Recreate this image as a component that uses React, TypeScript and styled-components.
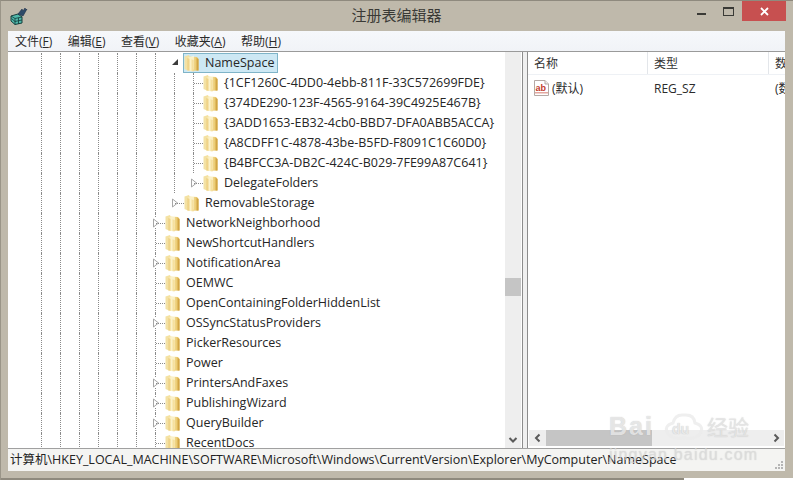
import React from "react";
import styled, { createGlobalStyle } from "styled-components";

const FONT = `"Open Sans", "Noto Sans CJK SC", sans-serif`;

const Global = createGlobalStyle`
  html, body { margin: 0; padding: 0; width: 793px; height: 480px; overflow: hidden; background: #fff; }
  #root { width: 793px; height: 480px; }
  * { box-sizing: border-box; }
`;

const Win = styled.div`
  position: relative;
  width: 793px;
  height: 480px;
  background: #bfb9ab;
  border-top: 1px solid #8f8a7e;
  border-left: 1px solid #9a9588;
  padding: 0 8px 9px 7px;
  display: flex;
  flex-direction: column;
  font-family: ${FONT};
  color: #222;
  overflow: hidden;
`;
const TitleBar = styled.div`
  height: 30px;
  flex: none;
  display: flex;
  align-items: flex-start;
  position: relative;
`;
const AppIcon = styled.svg`
  position: absolute;
  left: 2px;
  top: 6px;
`;
const Title = styled.div`
  flex: 1;
  text-align: center;
  font-size: 15px;
  line-height: 29px;
  color: #3a3a36;
`;
const Controls = styled.div`
  position: absolute;
  right: -1px;
  top: 0;
  display: flex;
  align-items: flex-start;
`;
const Ctl = styled.div<{ $w: number }>`
  width: ${(p) => p.$w}px;
  height: 20px;
  display: flex;
  align-items: center;
  justify-content: center;
`;
const CloseBtn = styled(Ctl)`
  background: #c75050;
`;
const MenuBar = styled.div`
  height: 21px;
  flex: none;
  background: linear-gradient(#f6f8fb, #f1f3f7);
  border-bottom: 1px solid #9a9a9a;
  display: flex;
  align-items: center;
  padding-left: 7px;
  gap: 15.5px;
  font-size: 12px;
`;
const MenuItem = styled.span`
  white-space: nowrap;
  color: #2b2b2b;
  u { text-decoration-thickness: 1px; text-underline-offset: 1px; }
`;
const Body = styled.div`
  flex: 1;
  min-height: 0;
  display: flex;
  background: #f0f0f0;
`;
const TreePane = styled.div`
  width: 515px;
  flex: none;
  background: #fff;
  display: flex;
  overflow: hidden;
  border-right: 1px solid #8d8d8d;
`;
const TreeRows = styled.div`
  flex: 1;
  min-width: 0;
  padding: 1px 0 0 24px;
  overflow: hidden;
`;
const Row = styled.div`
  height: 20px;
  display: flex;
  align-items: stretch;
  font-size: 12.5px;
  white-space: nowrap;
  color: #262626;
`;
const Guide = styled.div<{ $on?: boolean; $dash?: boolean }>`
  position: relative;
  width: 19px;
  flex: none;
  &::before {
    content: "";
    display: ${(p) => (p.$on ? "block" : "none")};
    position: absolute;
    left: 9px;
    top: 0;
    height: 20px;
    border-left: 1px dotted #8a8a8a;
  }
  &::after {
    content: "";
    display: ${(p) => (p.$dash ? "block" : "none")};
    position: absolute;
    left: 10px;
    top: 10px;
    width: 9px;
    border-top: 1px dotted #8a8a8a;
  }
`;
const Arrow = styled.svg`
  position: absolute;
  left: 6px;
  top: 5px;
  background: #fff;
`;
const Node = styled.div<{ $selected?: boolean }>`
  display: flex;
  align-items: center;
  gap: 6px;
  height: 20px;
  padding: 0 1px;
  margin-left: -1px;
  ${(p) =>
    p.$selected
      ? `background: #cde8f4; outline: 1px solid #7fb4c8; outline-offset: -1px; padding-right: 4px;`
      : ""}
`;
const Label = styled.span`
  line-height: 20px;
`;
const VScroll = styled.div`
  width: 16px;
  flex: none;
  background: #eeeeee;
  display: flex;
  flex-direction: column;
  margin-right: 1px;
`;
const ScrollBtn = styled.div`
  height: 17px;
  flex: none;
  display: flex;
  align-items: center;
  justify-content: center;
`;
const VTrack = styled.div`
  flex: 1;
  padding-top: 209px;
`;
const VThumb = styled.div`
  height: 18px;
  background: #c5c5c5;
`;
const Splitter = styled.div`
  width: 4px;
  flex: none;
  background: #f0f0f0;
`;
const ListPane = styled.div`
  flex: 1;
  min-width: 0;
  background: #fff;
  border-left: 1px solid #8d8d8d;
  display: flex;
  flex-direction: column;
  overflow: hidden;
`;
const Header = styled.div`
  height: 23px;
  flex: none;
  display: flex;
  font-size: 12px;
  border-bottom: 1px solid #eef1f5;
`;
const HeadCell = styled.div<{ $w: number }>`
  width: ${(p) => p.$w}px;
  flex: none;
  padding-left: 6px;
  line-height: 23px;
  color: #333;
  border-right: 1px solid #e3e6ea;
  white-space: nowrap;
  overflow: hidden;
`;
const ListRow = styled.div`
  height: 20px;
  margin-top: 3px;
  display: flex;
  align-items: center;
  font-size: 12px;
  color: #2b2b2b;
  flex: none;
`;
const ListCell = styled.div<{ $w: number }>`
  width: ${(p) => p.$w}px;
  flex: none;
  padding-left: 6px;
  display: flex;
  align-items: center;
  gap: 3px;
  white-space: nowrap;
  overflow: hidden;
`;
const Spacer = styled.div`
  flex: 1;
`;
const HScroll = styled.div`
  height: 16px;
  flex: none;
  margin: 0 1px 2px 1px;
  background: #eeeeee;
  display: flex;
  align-items: stretch;
`;
const HBtn = styled.div`
  width: 17px;
  flex: none;
  display: flex;
  align-items: center;
  justify-content: center;
`;
const HThumb = styled.div`
  width: 106px;
  background: #c5c5c5;
`;
const Status = styled.div`
  height: 23px;
  flex: none;
  background: #f4f4f2;
  border-top: 1px solid #a0a0a0;
  font-size: 12.5px;
  line-height: 22px;
  padding-left: 2px;
  color: #222;
  white-space: nowrap;
  position: relative;
`;
const Grip = styled.svg`
  position: absolute;
  right: 1px;
  bottom: 1px;
`;
const BottomLine = styled.div`
  position: absolute;
  left: 0;
  bottom: 0;
  width: 683px;
  height: 2px;
  background: #8f8a7e;
`;
const BottomWhite = styled.div`
  position: absolute;
  left: 683px;
  right: 0;
  bottom: 0;
  height: 2px;
  background: #fff;
`;
const Mark = styled.div`
  position: absolute;
  left: 608px;
  top: 407px;
  width: 150px;
  pointer-events: none;
`;
const MarkTop = styled.div`
  display: flex;
  align-items: center;
  height: 36px;
`;
const MarkBai = styled.span`
  font: bold 25px "Liberation Sans", sans-serif;
  letter-spacing: 2px;
  color: rgba(240, 240, 240, 0.8);
  text-shadow: 0 0 1px rgba(150, 150, 150, 0.6);
  width: 52px;
  flex: none;
`;
const MarkPaw = styled.div`
  position: relative;
  width: 46px;
  height: 36px;
  flex: none;
`;
const MarkDu = styled.span`
  position: absolute;
  left: 11px;
  top: 13px;
  font: bold 14px "Liberation Sans", sans-serif;
  color: rgba(240, 240, 240, 0.85);
  text-shadow: 0 0 1px rgba(150, 150, 150, 0.6);
`;
const MarkJy = styled.span`
  font: 21px "Noto Sans CJK SC", sans-serif;
  color: rgba(235, 235, 235, 0.75);
  text-shadow: 0 0 1px rgba(150, 150, 150, 0.5);
  white-space: nowrap;
`;
const MarkUrl = styled.div`
  font: 16px "Liberation Sans", sans-serif;
  letter-spacing: 1.2px;
  color: rgba(225, 225, 225, 0.6);
  text-shadow: 0 0 1px rgba(150, 150, 150, 0.4);
  margin-top: 2px;
  white-space: nowrap;
`;

const Folder = () => (
  <svg width="15" height="18" viewBox="0 0 15 18" style={{ flex: "none" }}>
    <defs>
      <linearGradient id="fb" x1="0" x2="1" y1="0" y2="0">
        <stop offset="0" stopColor="#f3e2a6" />
        <stop offset="0.55" stopColor="#f6e09a" />
        <stop offset="1" stopColor="#e3bd5c" />
      </linearGradient>
      <linearGradient id="ff" x1="0" x2="1" y1="0" y2="0">
        <stop offset="0" stopColor="#e9c468" />
        <stop offset="0.5" stopColor="#fcf2c8" />
        <stop offset="1" stopColor="#f2d78a" />
      </linearGradient>
    </defs>
    <path d="M0.5 2.5 L5 1 L5.5 2.5 L13 3 L14.5 5 L14.5 16.5 L5 17 L0.5 15 Z" fill="url(#fb)" />
    <path d="M3.5 4 L10 1.5 L10 15.5 L3.5 17.5 Z" fill="#fffbe6" opacity="0.6" />
    <path d="M3.5 4 L9.5 6 L9.5 17.5 L3.5 16.5 Z" fill="url(#ff)" />
    <path d="M12.6 4 L14.5 5 L14.5 16.5 L12.6 16.5 Z" fill="#d2a544" />
  </svg>
);

const ArrowOpen = () => (
  <Arrow width="8" height="9" viewBox="0 0 8 9">
    <path d="M7 1 L7 7 L1 7 Z" fill="#3c3c3c" />
  </Arrow>
);
const ArrowClosed = () => (
  <Arrow width="8" height="10" viewBox="0 0 8 10">
    <path d="M1.5 1 L6.5 5 L1.5 9 Z" fill="#fff" stroke="#a6a6a6" />
  </Arrow>
);

type Item = { name: string; level: number; kind: "open" | "closed" | "leaf"; selected?: boolean };

const items: Item[] = [
  { name: "NameSpace", level: 1, kind: "open", selected: true },
  { name: "{1CF1260C-4DD0-4ebb-811F-33C572699FDE}", level: 2, kind: "leaf" },
  { name: "{374DE290-123F-4565-9164-39C4925E467B}", level: 2, kind: "leaf" },
  { name: "{3ADD1653-EB32-4cb0-BBD7-DFA0ABB5ACCA}", level: 2, kind: "leaf" },
  { name: "{A8CDFF1C-4878-43be-B5FD-F8091C1C60D0}", level: 2, kind: "leaf" },
  { name: "{B4BFCC3A-DB2C-424C-B029-7FE99A87C641}", level: 2, kind: "leaf" },
  { name: "DelegateFolders", level: 2, kind: "closed" },
  { name: "RemovableStorage", level: 1, kind: "closed" },
  { name: "NetworkNeighborhood", level: 0, kind: "closed" },
  { name: "NewShortcutHandlers", level: 0, kind: "leaf" },
  { name: "NotificationArea", level: 0, kind: "closed" },
  { name: "OEMWC", level: 0, kind: "leaf" },
  { name: "OpenContainingFolderHiddenList", level: 0, kind: "leaf" },
  { name: "OSSyncStatusProviders", level: 0, kind: "closed" },
  { name: "PickerResources", level: 0, kind: "leaf" },
  { name: "Power", level: 0, kind: "leaf" },
  { name: "PrintersAndFaxes", level: 0, kind: "closed" },
  { name: "PublishingWizard", level: 0, kind: "closed" },
  { name: "QueryBuilder", level: 0, kind: "closed" },
  { name: "RecentDocs", level: 0, kind: "leaf" },
];

const BASE_GUIDES = [0, 1, 2, 3, 4, 5];

const TreeRow = ({ item }: { item: Item }) => {
  const { level, kind } = item;
  return (
    <Row>
      {BASE_GUIDES.map((g) => (
        <Guide key={g} $on />
      ))}
      {level >= 1 && <Guide $on />}
      {level >= 2 && <Guide $on />}
      {kind === "open" ? (
        <Guide>
          <ArrowOpen />
        </Guide>
      ) : kind === "closed" ? (
        <Guide $on={level === 0} $dash>
          <ArrowClosed />
        </Guide>
      ) : (
        <Guide $on $dash />
      )}
      <Node $selected={item.selected}>
        <Folder />
        <Label>{item.name}</Label>
      </Node>
    </Row>
  );
};

const Chevron = ({ d }: { d: string }) => (
  <svg width="10" height="10" viewBox="0 0 10 10">
    <path d={d} fill="none" stroke="#5a5a5a" strokeWidth="2" />
  </svg>
);

export default function App() {
  return (
    <>
      <Global />
      <Win>
        <TitleBar>
          <AppIcon width="18" height="18" viewBox="0 0 18 18">
            <path d="M1 9 L8 7 L12 10 L12 16 L5 17.5 L1 14 Z" fill="#4fb8aa" stroke="#17403f" />
            <path d="M5 11.5 L5 17.5 M5 11.5 L12 10 M1 9 L5 11.5 M8.5 10.8 V17 M1.5 11.5 L5 14.5 L12 13" fill="none" stroke="#123a3a" strokeWidth="0.8" />
            <path d="M8 7 L12 2 L13 4 L15 1 L16 3 L17 2 L13 9 Z" fill="#2d4a68" stroke="#1c2f4a" strokeWidth="0.6" />
          </AppIcon>
          <Title>注册表编辑器</Title>
          <Controls>
            <Ctl $w={27}>
              <svg width="9" height="7"><rect width="9" height="2" y="5" fill="#3a3a36" /></svg>
            </Ctl>
            <Ctl $w={27}>
              <svg width="11" height="9"><rect x="0.5" y="0.5" width="10" height="8" fill="none" stroke="#3a3a36" /><rect x="0" y="0" width="11" height="2" fill="#3a3a36" /></svg>
            </Ctl>
            <CloseBtn $w={44}>
              <svg width="9" height="9" viewBox="0 0 9 9"><path d="M1 1 L8 8 M8 1 L1 8" stroke="#fff" strokeWidth="1.8" /></svg>
            </CloseBtn>
          </Controls>
        </TitleBar>
        <MenuBar>
          <MenuItem>文件(<u>F</u>)</MenuItem>
          <MenuItem>编辑(<u>E</u>)</MenuItem>
          <MenuItem>查看(<u>V</u>)</MenuItem>
          <MenuItem>收藏夹(<u>A</u>)</MenuItem>
          <MenuItem>帮助(<u>H</u>)</MenuItem>
        </MenuBar>
        <Body>
          <TreePane>
            <TreeRows>
              {items.map((it) => (
                <TreeRow key={it.name} item={it} />
              ))}
            </TreeRows>
            <VScroll>
              <ScrollBtn />
              <VTrack>
                <VThumb />
              </VTrack>
              <ScrollBtn>
                <Chevron d="M1.5 3 L5 6.5 L8.5 3" />
              </ScrollBtn>
            </VScroll>
          </TreePane>
          <Splitter />
          <ListPane>
            <Header>
              <HeadCell $w={120}>名称</HeadCell>
              <HeadCell $w={121}>类型</HeadCell>
              <HeadCell $w={20}>数据</HeadCell>
            </Header>
            <ListRow>
              <ListCell $w={120}>
                <svg width="15" height="16" viewBox="0 0 15 16" style={{ flex: "none" }}>
                  <path d="M0.5 0.5 H11 L14.5 4 V15.5 H0.5 Z" fill="#fff" stroke="#b5a9a5" />
                  <path d="M11 0.5 V4 H14.5" fill="#eee" stroke="#b5a9a5" />
                  <rect x="1" y="12" width="13" height="1.5" fill="#e3a79f" />
                  <text x="1.5" y="10.5" fontSize="9" fontWeight="bold" fontFamily="Liberation Sans" fill="#c23a2b">ab</text>
                </svg>
                <span>(默认)</span>
              </ListCell>
              <ListCell $w={121}>REG_SZ</ListCell>
              <ListCell $w={20}>(数</ListCell>
            </ListRow>
            <Spacer />
            <HScroll>
              <HBtn>
                <Chevron d="M6.5 1.5 L3 5 L6.5 8.5" />
              </HBtn>
              <HThumb />
              <Spacer />
              <HBtn>
                <Chevron d="M3.5 1.5 L7 5 L3.5 8.5" />
              </HBtn>
            </HScroll>
          </ListPane>
        </Body>
        <Status>
          计算机\HKEY_LOCAL_MACHINE\SOFTWARE\Microsoft\Windows\CurrentVersion\Explorer\MyComputer\NameSpace
          <Grip width="10" height="10" viewBox="0 0 10 10">
            <g fill="#b5b5b5">
              <rect x="7" y="1" width="2" height="2" />
              <rect x="4" y="4" width="2" height="2" />
              <rect x="7" y="4" width="2" height="2" />
              <rect x="1" y="7" width="2" height="2" />
              <rect x="4" y="7" width="2" height="2" />
              <rect x="7" y="7" width="2" height="2" />
            </g>
          </Grip>
        </Status>
        <BottomLine />
        <BottomWhite />
        <Mark>
          <MarkTop>
            <MarkBai>Bai</MarkBai>
            <MarkPaw>
              <svg width="46" height="36" viewBox="0 0 46 36">
                <path d="M7 26 Q2 18 12 15 Q14 6 23 7 Q33 6 34 15 Q44 18 39 26 Q34 32 23 30 Q12 32 7 26 Z" fill="none" stroke="rgba(235,235,235,0.8)" strokeWidth="3" />
              </svg>
              <MarkDu>du</MarkDu>
            </MarkPaw>
            <MarkJy>经验</MarkJy>
          </MarkTop>
          <MarkUrl>jingyan.baidu.com</MarkUrl>
        </Mark>
      </Win>
    </>
  );
}
